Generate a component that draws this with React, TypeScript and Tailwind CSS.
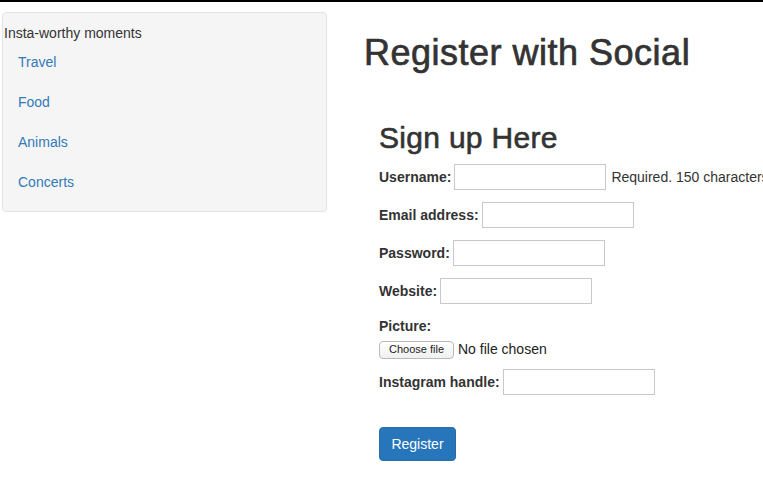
const links = ['Travel', 'Food', 'Animals', 'Concerts'];

const Field = ({ label, extra }: { label: string; extra?: string }) => (
  <div className="flex h-[26px] items-center whitespace-nowrap">
    <label className="mr-[3px] text-[14px] font-bold text-[#333]">{label}</label>
    <input
      type="text"
      className="h-[26px] w-[152px] border border-[#c8c8c8] bg-white outline-none"
    />
    {extra && <span className="ml-[5px] text-[14px] text-[#333]">{extra}</span>}
  </div>
);

const App = () => {
  return (
    <div
      className="h-[482px] w-[763px] overflow-hidden border-t-2 border-black bg-white text-[#333]"
      style={{ fontFamily: '"Liberation Sans", Arial, sans-serif' }}
    >
      <div className="flex">
        <aside className="ml-[2px] mt-[10px] h-[200px] w-[325px] shrink-0 rounded-[4px] border border-[#e3e3e3] bg-[#f5f5f5]">
          <p className="mt-[10px] pl-[1px] text-[14px] leading-[20px] text-[#333]">
            Insta-worthy moments
          </p>
          <ul className="mt-[9px] flex flex-col">
            {links.map(link => (
              <li key={link} className="h-[40px] pl-[15px] text-[14px] leading-[20px]">
                <a href="#" className="text-[#337ab7]">
                  {link}
                </a>
              </li>
            ))}
          </ul>
        </aside>

        <main className="ml-[37px] shrink-0">
          <h1 className="mt-[31px] text-[36px] font-normal leading-[40px] tracking-[0.5px] text-[#333] [-webkit-text-stroke:0.7px_#333]">
            Register with Social
          </h1>

          <div className="ml-[15px] mt-[48px]">
            <h2 className="text-[30px] font-normal leading-[33px] tracking-[0.3px] text-[#333] [-webkit-text-stroke:0.6px_#333]">
              Sign up Here
            </h2>

            <form className="mt-[10px] flex flex-col">
              <Field label="Username:" extra="Required. 150 characters or fewer." />
              <div className="mt-[12px]">
                <Field label="Email address:" />
              </div>
              <div className="mt-[12px]">
                <Field label="Password:" />
              </div>
              <div className="mt-[12px]">
                <Field label="Website:" />
              </div>

              <label className="mt-[12px] text-[14px] font-bold leading-[20px]">Picture:</label>
              <div className="mt-[3px] flex items-center whitespace-nowrap">
                <span className="flex h-[18px] w-[75px] items-center justify-center rounded-[4px] border border-[#b9b9b9] bg-gradient-to-b from-white to-[#f0f0f0] text-[11px] text-[#222]">
                  Choose file
                </span>
                <span className="ml-[4px] text-[14px] text-[#222]">No file chosen</span>
              </div>

              <div className="mt-[9px]">
                <Field label="Instagram handle:" />
              </div>

              <div className="mt-[32px]">
                <button
                  type="button"
                  className="h-[34px] w-[77px] rounded-[4px] border border-[#2e6da4] bg-[#2776bb] text-[14px] text-white"
                >
                  Register
                </button>
              </div>
            </form>
          </div>
        </main>
      </div>
    </div>
  );
};

export default App;
